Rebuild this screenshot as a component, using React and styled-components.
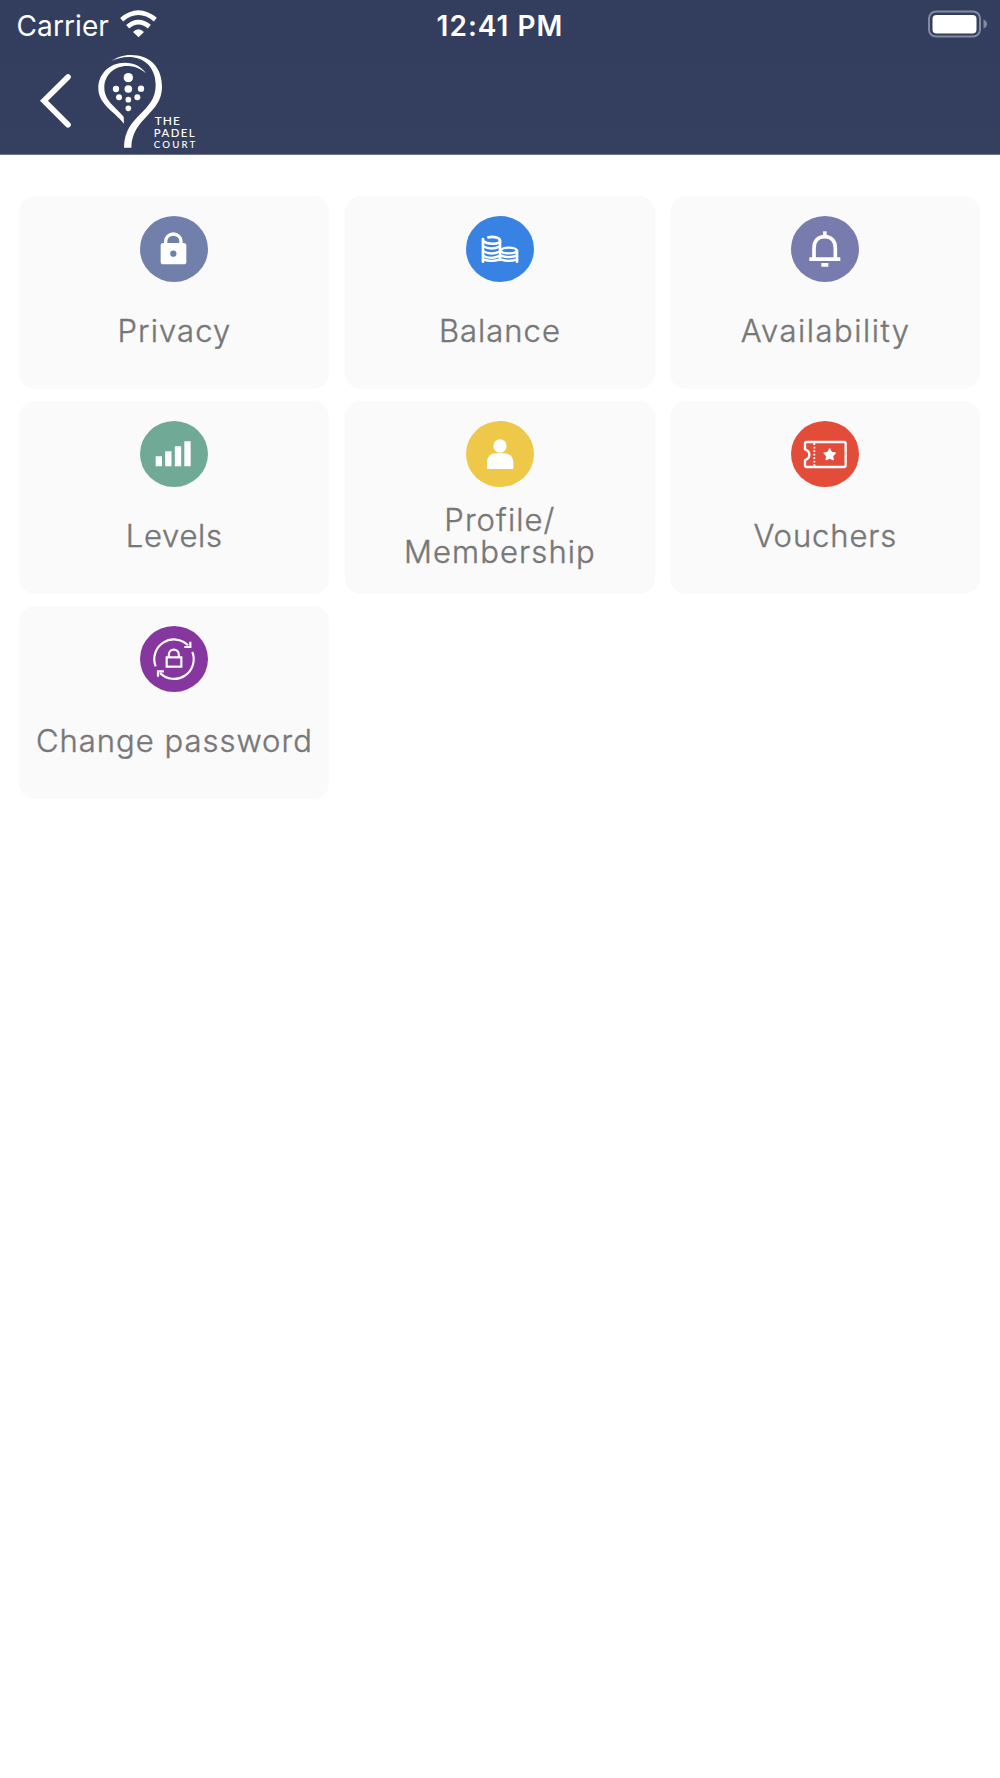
import React from "react";
import styled, { createGlobalStyle } from "styled-components";

const GlobalStyle = createGlobalStyle`
  body {
    margin: 0;
    background: #fff;
    font-family: Inter, "Liberation Sans", sans-serif;
  }
`;

const Header = styled.header`
  box-sizing: border-box;
  height: 155px;
  background: linear-gradient(#333d5e, #353f5e);
  border-bottom: 1px solid #6c748b;
  color: #fff;
`;

const StatusBar = styled.div`
  display: grid;
  grid-template-columns: 1fr auto 1fr;
  align-items: center;
  height: 51px;
  padding: 0 13px 0 16.5px;
  font-size: 28px;
  line-height: 34px;
`;

const Carrier = styled.div`
  display: flex;
  align-items: center;
  gap: 11px;
  letter-spacing: 0.1px;

  svg {
    margin-top: -3px;
  }
`;

const Clock = styled.div`
  margin-right: 3.5px;
  font-weight: 600;
  font-size: 28px;
  letter-spacing: 1px;
`;

const Battery = styled.svg`
  justify-self: end;
  margin-top: -3px;
`;

const NavBar = styled.nav`
  display: flex;
  align-items: flex-start;
  gap: 24px;
  padding: 2px 0 0 36px;
`;

const BackButton = styled.button`
  display: flex;
  margin: 17px 0 0;
  padding: 0;
  border: 0;
  background: none;
`;

const Menu = styled.main`
  display: grid;
  grid-template-columns: repeat(3, 310px);
  grid-auto-rows: 192.5px;
  gap: 12.7px 15.5px;
  padding: 41px 0 0 19.4px;
`;

const Card = styled.div`
  display: flex;
  flex-direction: column;
  align-items: center;
  padding-top: 20px;
  box-sizing: border-box;
  border-radius: 16px;
  background: #fafafa;
`;

const Badge = styled.div`
  display: flex;
  width: 68px;
  height: 66px;
  border-radius: 50%;
  background: ${(props) => props.$color};
`;

const Label = styled.div`
  display: flex;
  align-items: center;
  height: 98px;
  color: #777;
  font-size: 31px;
  font-weight: 300;
  -webkit-text-stroke: 0.4px #777;
  line-height: 32px;
  letter-spacing: ${(props) => props.$spacing}px;
  margin-right: ${(props) => 1 - props.$spacing}px;
  text-align: center;
  white-space: pre;
`;

const Glyph = ({ children }) => (
  <svg width="68" height="66" viewBox="0 0 204 198" fill="none" stroke="#fff">
    {children}
  </svg>
);

const LockIcon = () => (
  <Glyph>
    <rect x="62" y="81" width="77" height="64" rx="8" fill="#fff" stroke="none" />
    <path d="M77 84V76a23 22 0 0 1 46 0v8" strokeWidth="10" />
    <circle cx="100" cy="113" r="9.5" fill="#7080ab" stroke="none" />
  </Glyph>
);

const CoinsIcon = () => (
  <Glyph>
    <g strokeWidth="8" strokeLinecap="round">
      <path d="M51 69V137M102 74V132M153 104V137" />
      <path d="M67 64C86 60 102 66 102 74C102 84 67 88 51 75" />
      <path d="M51 91Q76 104 102 91M51 106Q76 119 102 106M51 119Q76 132 102 119M51 130Q76 139 102 130" strokeWidth="7" />
      <path d="M104 104C108 92 149 92 153 104C149 115 108 115 104 104Z" strokeWidth="7" />
      <path d="M104 118Q128 129 153 118M104 130Q128 139 153 130" strokeWidth="7" />
    </g>
  </Glyph>
);

const BellIcon = () => (
  <Glyph>
    <path d="M69 127V97C69 74 82 62 101 62S133 74 133 97V127" strokeWidth="11" />
    <path d="M55 129.500H148M91 146.500H112" strokeWidth="11" />
    <path d="M101.500 46V62" strokeWidth="11" />
  </Glyph>
);

const LevelsIcon = () => (
  <Glyph>
    <path d="M56.500 136V106M85 136V91M114 136V76M142.500 136V61" strokeWidth="19" />
  </Glyph>
);

const ProfileIcon = () => (
  <Glyph>
    <circle cx="102" cy="75" r="20" fill="#fff" stroke="none" />
    <path d="M63 144V126Q63 97 90 97H114Q142 97 142 126V144Z" fill="#fff" stroke="none" />
  </Glyph>
);

const TicketIcon = () => (
  <Glyph>
    <path
      d="M47 63H159Q164 63 164 68V133Q164 138 159 138H47Q42 138 42 133V117Q55 113 55 101Q55 89 42 85V68Q42 63 47 63Z"
      strokeWidth="7"
      strokeLinejoin="round"
    />
    <path d="M70 67V136" strokeWidth="5.500" strokeDasharray="5 5.500" />
    <path
      d="M116 84L121 95L132 96.500L124 104.500L126 115.500L116 110.500L106 115.500L108 104.500L100 96.500L111 95Z"
      fill="#fff"
      strokeWidth="5"
      strokeLinejoin="round"
    />
  </Glyph>
);

const PasswordIcon = () => (
  <Glyph>
    <g strokeWidth="6.5">
      <path d="M47 121A59 59 0 0 1 144 58" />
      <path d="M157 78A59 59 0 0 1 60 141" />
      <path d="M151 47V63H133M54 152V136H72" />
      <rect x="80" y="94" width="44" height="28" />
      <path d="M86.500 93V86A15 15 0 0 1 116.500 86V93" />
    </g>
  </Glyph>
);

const Logo = () => (
  <svg width="102" height="97" viewBox="288 159 306 291" fill="#fff">
    <path d="M333 184C350 172 368 165 392 165C452 165 486 204 486 260C486 342 396 352 394 443H372C373 343 467 340 467 255C467 200 430 171 386 171C365 171 349 176 333 184Z" />
    <path d="M438 220C425 200 402 188 375 188C326 188 295 223 295 265C295 311 340 333 372 371L371 350C348 321 313 303 313 263C313 225 343 198 380 198C404 198 422 206 438 220Z" />
    <circle cx="385" cy="233" r="14" />
    <circle cx="385" cy="267" r="11.500" />
    <circle cx="348" cy="267" r="9.500" />
    <circle cx="423" cy="266" r="9.500" />
    <circle cx="357" cy="292" r="9" />
    <circle cx="412" cy="292" r="9" />
    <circle cx="385" cy="299" r="8.500" />
    <circle cx="385" cy="325" r="8.500" />
    <g fontFamily="Lato, sans-serif" fontWeight="500">
      <text x="464" y="374" fontSize="36" textLength="76">THE</text>
      <text x="461" y="411" fontSize="34" textLength="123">PADEL</text>
      <text x="461" y="444" fontSize="29" textLength="125">COURT</text>
    </g>
  </svg>
);

const items = [
  { label: "Privacy", color: "#7080ab", icon: <LockIcon />, spacing: 1.1 },
  { label: "Balance", color: "#3882e3", icon: <CoinsIcon />, spacing: 1 },
  { label: "Availability", color: "#777bae", icon: <BellIcon />, spacing: 1.5 },
  { label: "Levels", color: "#70a995", icon: <LevelsIcon />, spacing: 0.7 },
  { label: "Profile/\nMembership", color: "#eec849", icon: <ProfileIcon />, spacing: 1.1 },
  { label: "Vouchers", color: "#e24c39", icon: <TicketIcon />, spacing: 0.9 },
  { label: "Change password", color: "#86379f", icon: <PasswordIcon />, spacing: 1 },
];

const App = () => {
  return (
    <>
      <GlobalStyle />
      <Header>
        <StatusBar>
          <Carrier>
            Carrier
            <svg width="37" height="28" viewBox="360 29 111 84" fill="none" stroke="#fff">
              <path d="M365 58Q415 16 466 58" strokeWidth="14" />
              <path d="M383 79Q415 52 448 79" strokeWidth="14" />
              <path d="M399 95Q415 79 432 95L415.500 111Z" fill="#fff" stroke="none" />
            </svg>
          </Carrier>
          <Clock>12:41 PM</Clock>
          <Battery width="60" height="28" viewBox="0 0 60 28">
            <rect x="2" y="1.500" width="51" height="25" rx="7" fill="none" stroke="#858b9e" strokeWidth="2" />
            <rect x="5.500" y="5" width="44" height="18.500" rx="4" fill="#fff" />
            <path d="M56.500 9.500Q60 11 60 14T56.500 18.500Z" fill="#858b9e" />
          </Battery>
        </StatusBar>
        <NavBar>
          <BackButton aria-label="Back">
            <svg width="36" height="61" viewBox="108 210 108 183" fill="none" stroke="#fff">
              <path d="M204 231L132 302L204 374" strokeWidth="17" strokeLinecap="round" />
            </svg>
          </BackButton>
          <Logo />
        </NavBar>
      </Header>
      <Menu>
        {items.map((item) => (
          <Card key={item.label}>
            <Badge $color={item.color}>{item.icon}</Badge>
            <Label $spacing={item.spacing}>{item.label}</Label>
          </Card>
        ))}
      </Menu>
    </>
  );
};

export default App;
